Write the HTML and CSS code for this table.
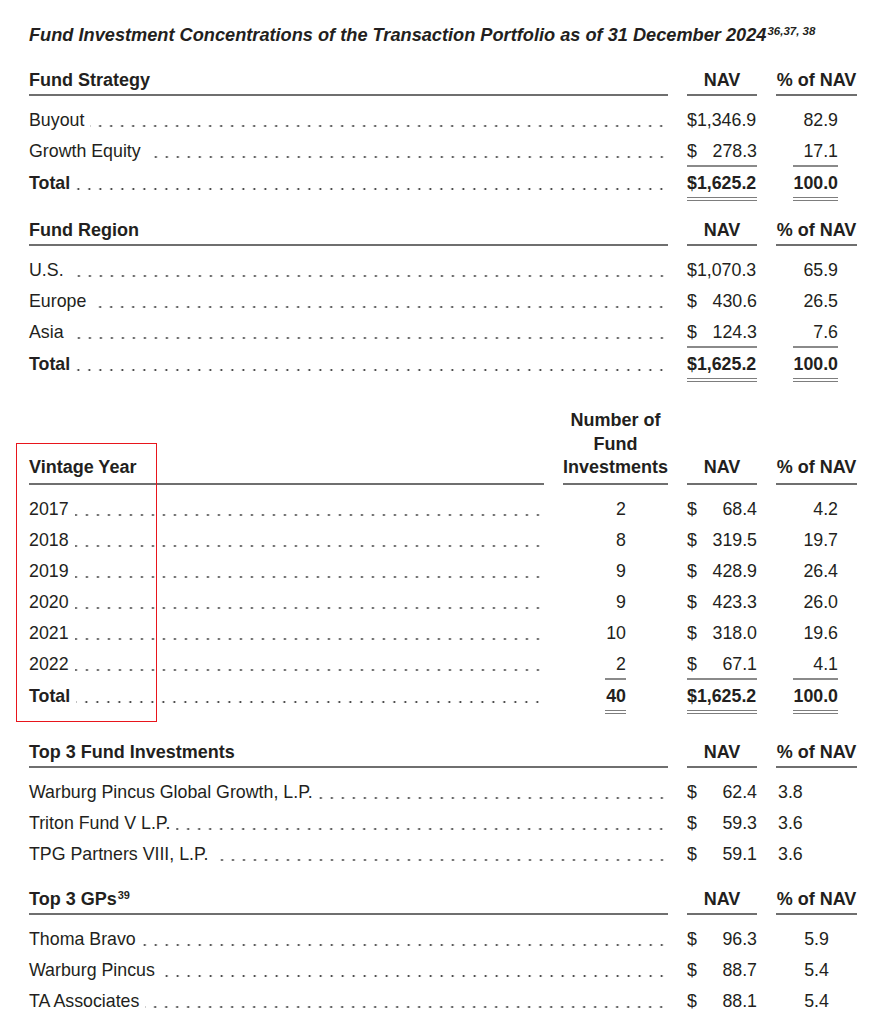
FILE: index.html
```html
<!DOCTYPE html>
<html>
<head>
<meta charset="utf-8">
<link rel="stylesheet" href="styles.css">
</head>
<body>
<div class="page">
  <h1 class="title">Fund Investment Concentrations of the Transaction Portfolio as of 31 December 2024<sup class="tsup">36,37, 38</sup></h1>

  <section class="sec sec-first">
    <div class="row t3 head">
      <div class="hc lab-h">Fund Strategy</div>
      <div class="hc">NAV</div>
      <div class="hc">% of NAV</div>
    </div>
    <div class="body">
      <div class="row t3">
        <div class="lab"><span>Buyout</span><span class="dots"></span></div>
        <div class="nav"><span>$1,346.9</span></div>
        <div class="pct"><span class="v">82.9</span></div>
      </div>
      <div class="row t3">
        <div class="lab"><span>Growth Equity</span><span class="dots"></span></div>
        <div class="nav ul"><span>$</span><span>278.3</span></div>
        <div class="pct"><span class="v ul">17.1</span></div>
      </div>
      <div class="row t3 total">
        <div class="lab"><span>Total</span><span class="dots"></span></div>
        <div class="nav dl"><span>$1,625.2</span></div>
        <div class="pct"><span class="v dl">100.0</span></div>
      </div>
    </div>
  </section>

  <section class="sec sec-near">
    <div class="row t3 head">
      <div class="hc lab-h">Fund Region</div>
      <div class="hc">NAV</div>
      <div class="hc">% of NAV</div>
    </div>
    <div class="body">
      <div class="row t3">
        <div class="lab"><span>U.S.</span><span class="dots"></span></div>
        <div class="nav"><span>$1,070.3</span></div>
        <div class="pct"><span class="v">65.9</span></div>
      </div>
      <div class="row t3">
        <div class="lab"><span>Europe</span><span class="dots"></span></div>
        <div class="nav"><span>$</span><span>430.6</span></div>
        <div class="pct"><span class="v">26.5</span></div>
      </div>
      <div class="row t3">
        <div class="lab"><span>Asia</span><span class="dots"></span></div>
        <div class="nav ul"><span>$</span><span>124.3</span></div>
        <div class="pct"><span class="v ul">7.6</span></div>
      </div>
      <div class="row t3 total">
        <div class="lab"><span>Total</span><span class="dots"></span></div>
        <div class="nav dl"><span>$1,625.2</span></div>
        <div class="pct"><span class="v dl">100.0</span></div>
      </div>
    </div>
  </section>

  <section class="sec sec-far">
    <div class="row t4 head tall">
      <div class="hc lab-h">Vintage Year</div>
      <div class="hc">Number of<br>Fund<br>Investments</div>
      <div class="hc">NAV</div>
      <div class="hc">% of NAV</div>
    </div>
    <div class="body">
      <div class="row t4">
        <div class="lab"><span>2017</span><span class="dots"></span></div>
        <div class="num"><span class="n">2</span></div>
        <div class="nav"><span>$</span><span>68.4</span></div>
        <div class="pct"><span class="v">4.2</span></div>
      </div>
      <div class="row t4">
        <div class="lab"><span>2018</span><span class="dots"></span></div>
        <div class="num"><span class="n">8</span></div>
        <div class="nav"><span>$</span><span>319.5</span></div>
        <div class="pct"><span class="v">19.7</span></div>
      </div>
      <div class="row t4">
        <div class="lab"><span>2019</span><span class="dots"></span></div>
        <div class="num"><span class="n">9</span></div>
        <div class="nav"><span>$</span><span>428.9</span></div>
        <div class="pct"><span class="v">26.4</span></div>
      </div>
      <div class="row t4">
        <div class="lab"><span>2020</span><span class="dots"></span></div>
        <div class="num"><span class="n">9</span></div>
        <div class="nav"><span>$</span><span>423.3</span></div>
        <div class="pct"><span class="v">26.0</span></div>
      </div>
      <div class="row t4">
        <div class="lab"><span>2021</span><span class="dots"></span></div>
        <div class="num"><span class="n">10</span></div>
        <div class="nav"><span>$</span><span>318.0</span></div>
        <div class="pct"><span class="v">19.6</span></div>
      </div>
      <div class="row t4">
        <div class="lab"><span>2022</span><span class="dots"></span></div>
        <div class="num"><span class="n ul">2</span></div>
        <div class="nav ul"><span>$</span><span>67.1</span></div>
        <div class="pct"><span class="v ul">4.1</span></div>
      </div>
      <div class="row t4 total">
        <div class="lab"><span>Total</span><span class="dots"></span></div>
        <div class="num"><span class="n dl">40</span></div>
        <div class="nav dl"><span>$1,625.2</span></div>
        <div class="pct"><span class="v dl">100.0</span></div>
      </div>
    </div>
  </section>

  <section class="sec sec-far">
    <div class="row t3 head">
      <div class="hc lab-h">Top 3 Fund Investments</div>
      <div class="hc">NAV</div>
      <div class="hc">% of NAV</div>
    </div>
    <div class="body">
      <div class="row t3">
        <div class="lab"><span>Warburg Pincus Global Growth, L.P.</span><span class="dots"></span></div>
        <div class="nav"><span>$</span><span>62.4</span></div>
        <div class="pct pct-left"><span>3.8</span></div>
      </div>
      <div class="row t3">
        <div class="lab"><span>Triton Fund V L.P.</span><span class="dots"></span></div>
        <div class="nav"><span>$</span><span>59.3</span></div>
        <div class="pct pct-left"><span>3.6</span></div>
      </div>
      <div class="row t3">
        <div class="lab"><span>TPG Partners VIII, L.P.</span><span class="dots"></span></div>
        <div class="nav"><span>$</span><span>59.1</span></div>
        <div class="pct pct-left"><span>3.6</span></div>
      </div>
    </div>
  </section>

  <section class="sec sec-near">
    <div class="row t3 head">
      <div class="hc lab-h">Top 3 GPs<sup class="hsup">39</sup></div>
      <div class="hc">NAV</div>
      <div class="hc">% of NAV</div>
    </div>
    <div class="body">
      <div class="row t3">
        <div class="lab"><span>Thoma Bravo</span><span class="dots"></span></div>
        <div class="nav"><span>$</span><span>96.3</span></div>
        <div class="pct pct-center"><span>5.9</span></div>
      </div>
      <div class="row t3">
        <div class="lab"><span>Warburg Pincus</span><span class="dots"></span></div>
        <div class="nav"><span>$</span><span>88.7</span></div>
        <div class="pct pct-center"><span>5.4</span></div>
      </div>
      <div class="row t3">
        <div class="lab"><span>TA Associates</span><span class="dots"></span></div>
        <div class="nav"><span>$</span><span>88.1</span></div>
        <div class="pct pct-center"><span>5.4</span></div>
      </div>
    </div>
  </section>
</div>
<div class="annot"></div>
</body>
</html>
```

FILE: styles.css
```css
html, body {
  margin: 0;
  padding: 0;
  background: #ffffff;
}

body {
  font-family: "Liberation Sans", Arial, sans-serif;
  color: #231f20;
}

.page {
  width: 828px;
  padding: 24px 0 0 29px;
}

.title {
  margin: 0;
  font-size: 18.2px;
  line-height: 22px;
  font-weight: bold;
  font-style: italic;
  white-space: nowrap;
}

.tsup {
  font-size: 11.5px;
  line-height: 0;
  vertical-align: 6px;
  margin-left: 1px;
}

.hsup {
  font-size: 11px;
  line-height: 0;
  vertical-align: 6px;
  margin-left: 1px;
}

.sec-first { margin-top: 23px; }
.sec-near { margin-top: 18px; }
.sec-far { margin-top: 27px; }

.row {
  display: grid;
  column-gap: 19px;
}

.t3 { grid-template-columns: 1fr 70px 81px; }
.t4 { grid-template-columns: 1fr 105px 70px 81px; }

.head {
  align-items: end;
}

.head .hc {
  font-size: 18px;
  font-weight: bold;
  line-height: 22px;
  padding-bottom: 3px;
  border-bottom: 2px solid #6f6f6f;
  text-align: center;
  white-space: nowrap;
}

.head.tall .hc { line-height: 23.5px; }

.head .lab-h { text-align: left; }

.body {
  margin-top: 9px;
}

.body .row > div {
  font-size: 17.8px;
  line-height: 31px;
  height: 31px;
  box-sizing: border-box;
  white-space: nowrap;
}

.body .total > div {
  height: 34px;
  line-height: 28px;
  padding-top: 2px;
  font-weight: bold;
}

.lab {
  display: flex;
}

.dots {
  flex: 1;
  margin-left: 6px;
  background-image: radial-gradient(circle, #3a3a3a 0, #3a3a3a 0.8px, rgba(58,58,58,0) 1.3px);
  background-size: 11px 4px;
  background-repeat: repeat-x;
  background-position: right 1px top 19px;
}

.total .dots {
  background-position: right 1px top 18px;
}

.nav {
  display: flex;
  justify-content: space-between;
}

.body .pct {
  display: flex;
  justify-content: flex-end;
  padding-right: 19px;
}

.body .pct-left {
  justify-content: flex-start;
  padding: 0 0 0 2px;
}

.body .pct-center {
  justify-content: center;
  padding: 0;
}

.v {
  display: block;
  width: 45px;
  text-align: right;
}

.body .num {
  display: flex;
  justify-content: flex-end;
  padding-right: 42px;
}

.n {
  display: block;
  width: 21px;
  text-align: right;
}

.ul {
  border-bottom: 2px solid #8a8a8a;
}

.dl {
  border-bottom: 4px double #7d7d7d;
}

.annot {
  position: absolute;
  left: 16px;
  top: 443px;
  width: 141px;
  height: 279px;
  box-sizing: border-box;
  border: 1.5px solid #e8151c;
  pointer-events: none;
}
```
